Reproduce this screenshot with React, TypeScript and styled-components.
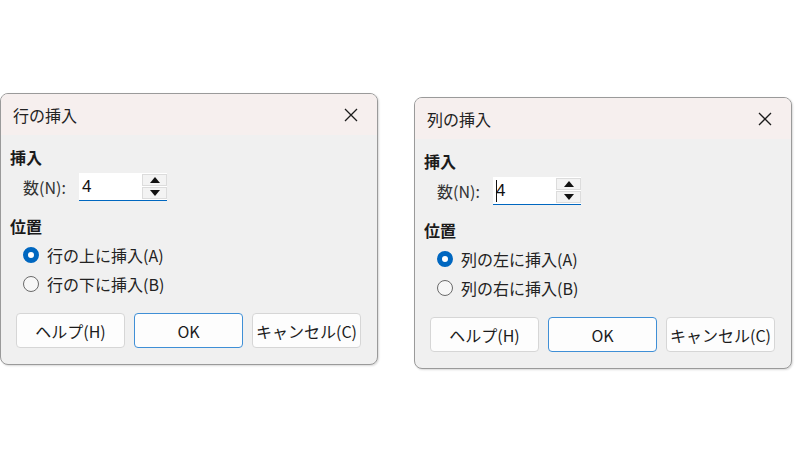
import React from 'react';
import styled, { createGlobalStyle } from 'styled-components';

const GlobalStyle = createGlobalStyle`
    html, body {
        margin: 0;
        padding: 0;
        background: #ffffff;
    }
    body {
        font-family: "Noto Sans CJK JP", "Noto Sans", "Liberation Sans", sans-serif;
        color: #1b1b1b;
    }
`

type DialogData = {
    title: string;
    options: string[];
    caret?: boolean;
    offset: number;
};

const dialogs: DialogData[] = [
    { title: '行の挿入', options: ['行の上に挿入(A)', '行の下に挿入(B)'], offset: 93 },
    { title: '列の挿入', options: ['列の左に挿入(A)', '列の右に挿入(B)'], caret: true, offset: 97 },
];

const InsertDialog = ({ data }: { data: DialogData }) => {
    return (
        <Dialog $top={data.offset}>
            <TitleBar>
                <Title>{data.title}</Title>
                <CloseButton>
                    <svg width="16" height="16" viewBox="0 0 16 16">
                        <path d="M2 2 L14 14 M14 2 L2 14" stroke="#1b1b1b" strokeWidth="1.3" fill="none" />
                    </svg>
                </CloseButton>
            </TitleBar>
            <Body>
                <Heading>挿入</Heading>
                <FieldRow>
                    <FieldLabel>数(N):</FieldLabel>
                    <NumberBox>
                        <NumberValue>
                            {data.caret && <Caret />}
                            4
                        </NumberValue>
                        <Spinner>
                            <SpinButton>
                                <svg width="10" height="6" viewBox="0 0 10 6"><path d="M5 0 L10 6 L0 6 Z" fill="#111" /></svg>
                            </SpinButton>
                            <SpinButton>
                                <svg width="10" height="6" viewBox="0 0 10 6"><path d="M0 0 L10 0 L5 6 Z" fill="#111" /></svg>
                            </SpinButton>
                        </Spinner>
                    </NumberBox>
                </FieldRow>
                <Heading $gap={15}>位置</Heading>
                <RadioList>
                    {data.options.map((opt, i) => (
                        <RadioRow key={opt}>
                            <RadioDot $checked={i === 0} />
                            <span>{opt}</span>
                        </RadioRow>
                    ))}
                </RadioList>
                <ButtonRow>
                    <DialogButton>ヘルプ(H)</DialogButton>
                    <DialogButton $primary>OK</DialogButton>
                    <DialogButton>キャンセル(C)</DialogButton>
                </ButtonRow>
            </Body>
        </Dialog>
    );
};

export default function App() {
    return (
        <>
            <GlobalStyle />
            <Page>
                {dialogs.map((d) => (
                    <InsertDialog key={d.title} data={d} />
                ))}
            </Page>
        </>
    );
}

const Page = styled.div`
    width: 800px;
    height: 450px;
    display: flex;
    align-items: flex-start;
    gap: 36px;
    overflow: hidden;
`

const Dialog = styled.div<{ $top: number }>`
    margin-top: ${(p) => p.$top}px;
    width: 378px;
    height: 272px;
    box-sizing: border-box;
    border: 1px solid #9a9a9a;
    border-radius: 8px;
    background: #f0f0f0;
    overflow: hidden;
    display: flex;
    flex-direction: column;
    box-shadow: 1px 1px 2px rgba(0, 0, 0, 0.15);
`

const TitleBar = styled.div`
    height: 41px;
    flex-shrink: 0;
    display: flex;
    align-items: center;
    justify-content: space-between;
    padding: 0 18px 0 12px;
    background: #f6efee;
`

const Title = styled.span`
    font-size: 16px;
    font-weight: 400;
    color: #222;
`

const CloseButton = styled.span`
    display: flex;
    align-items: center;
`

const Body = styled.div`
    display: flex;
    flex-direction: column;
    padding: 12px 15px 0 9px;
`

const Heading = styled.div<{ $gap?: number }>`
    margin-top: ${(p) => p.$gap ?? 0}px;
    font-size: 16px;
    font-weight: 700;
    line-height: 20px;
`

const FieldRow = styled.div`
    display: flex;
    align-items: center;
    margin-top: 6px;
    padding-left: 13px;
    height: 28px;
`

const FieldLabel = styled.span`
    font-size: 16px;
    width: 56px;
    color: #333;
`

const NumberBox = styled.div`
    display: flex;
    width: 88px;
    height: 28px;
    box-sizing: border-box;
    background: #ffffff;
    border-bottom: 1px solid #0067c0;
`

const NumberValue = styled.div`
    position: relative;
    flex: 1;
    display: flex;
    align-items: center;
    padding-left: 3px;
    font-size: 17px;
    font-family: "Liberation Sans", "Noto Sans", sans-serif;
    color: #111;
`

const Caret = styled.span`
    position: absolute;
    left: 3px;
    top: 3px;
    width: 1px;
    height: 22px;
    background: #111;
`

const Spinner = styled.div`
    width: 25px;
    display: flex;
    flex-direction: column;
    gap: 1px;
    padding: 1px 0;
    background: #fff;
`

const SpinButton = styled.div`
    flex: 1;
    display: flex;
    align-items: center;
    justify-content: center;
    background: #f3f3f3;
    border: 1px solid #dcdcdc;
    box-sizing: border-box;
`

const RadioList = styled.div`
    display: flex;
    flex-direction: column;
    gap: 5px;
    margin-top: 7px;
    padding-left: 13px;
`

const RadioRow = styled.div`
    display: flex;
    align-items: center;
    gap: 8px;
    height: 24px;
    font-size: 16px;
    color: #222;
`

const RadioDot = styled.span<{ $checked?: boolean }>`
    width: 16px;
    height: 16px;
    border-radius: 50%;
    box-sizing: border-box;
    flex-shrink: 0;
    background: ${(p) => (p.$checked ? '#ffffff' : '#f7f7f7')};
    border: ${(p) => (p.$checked ? '5px solid #0067c0' : '1px solid #6a6a6a')};
`

const ButtonRow = styled.div`
    display: flex;
    gap: 9px;
    margin-top: 17px;
    padding-left: 6px;
`

const DialogButton = styled.div<{ $primary?: boolean }>`
    width: 109px;
    height: 35px;
    box-sizing: border-box;
    display: flex;
    align-items: center;
    justify-content: center;
    border-radius: 4px;
    background: #fdfdfd;
    border: 1px solid ${(p) => (p.$primary ? '#3f8fd6' : '#d6d6d6')};
    font-size: 16px;
    color: #1b1b1b;
`
